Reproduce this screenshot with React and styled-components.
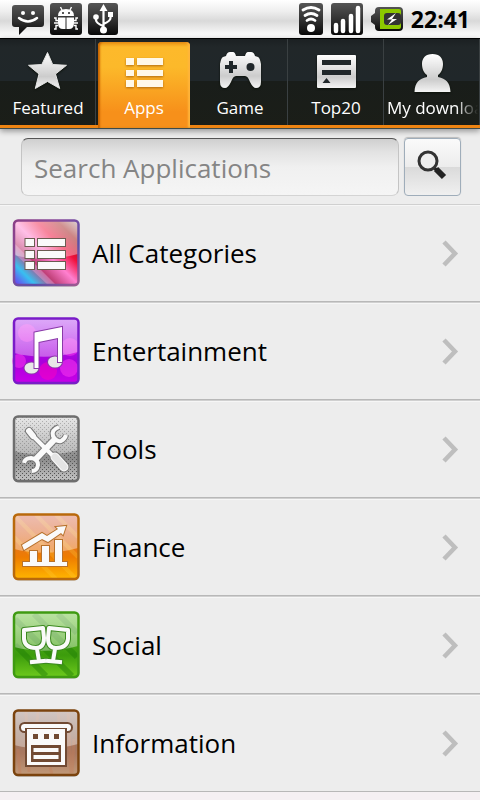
import React, { useState } from 'react';
import styled, { createGlobalStyle } from 'styled-components';

const GlobalStyle = createGlobalStyle`
  * {
    box-sizing: border-box;
  }

  body {
    margin: 0;
    background-color: #f5f0f3;
    font-family: "Open Sans", "Noto Sans", sans-serif;
  }
`;

const StatusBar = styled.header`
  display: flex;
  align-items: center;
  justify-content: space-between;
  height: 38px;
  padding: 0 10px 0 12px;
  background: linear-gradient(#ffffff 0%, #eeeeee 30%, #d9d9d9 55%, #f4f4f4 85%, #ffffff 100%);
`;

const StatusGroup = styled.div`
  display: flex;
  align-items: center;
  gap: ${({ gap }) => gap}px;

  svg {
    display: block;
  }
`;

const Clock = styled.time`
  font-size: 23px;
  font-weight: 700;
  line-height: 36px;
  color: #000;
`;

const TabBar = styled.nav`
  display: flex;
  height: 91px;
  border-top: 1px solid #000;
  border-bottom: 1px solid #3d4a4a;
  background: linear-gradient(#1b2022 0, #212729 8px, #20272a 42px, #191d1a 42px, #1b1e18 100%);
  box-shadow: inset 0 -3px 0 #ee8412, 0 2px 6px rgba(0, 0, 0, 0.4);
  position: relative;
`;

const Tab = styled.button`
  display: flex;
  flex: none;
  flex-direction: column;
  align-items: center;
  width: ${({ $active }) => ($active ? 'calc(20% - 4px)' : '20%')};
  margin: ${({ $active }) => ($active ? '3px 2px 0' : '0 0 3px')};
  padding: ${({ $active }) => ($active ? '8px 0 0' : '11px 0 0')};
  border: none;
  border-radius: ${({ $active }) => ($active ? '4px 4px 0 0' : '0')};
  background: ${({ $active }) => ($active ? 'linear-gradient(#e88f12 0, #fdb92b 5px, #fcb92a 25px, #f7901a 70px)' : 'transparent')};
  box-shadow: ${({ $active }) => ($active ? 'inset 2px 0 2px #c86400, inset -2px 0 2px #ffb53c' : 'inset -1px 0 0 #3a4042')};
  color: #fff;
  font-family: inherit;
  cursor: pointer;

  svg {
    display: block;
    filter: drop-shadow(0 1px 1px ${({ $active }) => ($active ? '#b06a10' : '#0a1008')});
  }
`;

const TabLabel = styled.span`
  width: 100%;
  padding: 2px 3px 0;
  overflow: hidden;
  font-size: 17px;
  line-height: 24px;
  text-align: ${({ $long }) => ($long ? 'left' : 'center')};
  white-space: nowrap;
  mask-image: ${({ $long }) => ($long ? 'linear-gradient(90deg, #000 75%, transparent 98%)' : 'none')};
`;

const SearchForm = styled.form`
  display: flex;
  gap: 5px;
  padding: 9px 19px 8px 21px;
  background-color: #ededed;
`;

const SearchInput = styled.input`
  flex: 1;
  min-width: 0;
  height: 58px;
  padding: 2px 12px 0;
  border: 1px solid #c4c4c4;
  border-top-color: #555;
  border-bottom-color: #d4d4d4;
  border-radius: 7px;
  background: linear-gradient(#cfcfcf, #e2e2e2 22%, #f0f0f0 50%, #f5f5f5);
  font-family: inherit;
  font-size: 26px;
  color: #333;

  &::placeholder {
    color: #858585;
    opacity: 1;
  }
`;

const SearchButton = styled.button`
  display: flex;
  align-items: center;
  justify-content: center;
  width: 57px;
  height: 58px;
  padding: 0 2px 2px 0;
  border: 1px solid #9fadba;
  border-radius: 4px;
  background: linear-gradient(#fafafa, #ececec 50%, #dadada 50%, #f0f0f0);
  box-shadow: 0 -1px 1px #bbb;
  cursor: pointer;
`;

const CategoryList = styled.ul`
  margin: 0;
  padding: 0;
  list-style: none;
`;

const CategoryRow = styled.a`
  display: flex;
  align-items: center;
  gap: 12px;
  height: 98px;
  padding: 1px 21px 0 12px;
  border-bottom: 1px solid #b8b8b8;
  background-color: #ededed;
  box-shadow: inset 0 1px 0 #d0d0d0, inset 0 2px 0 #f6f6f6;
  color: #000;
  text-decoration: none;

  svg {
    display: block;
    flex: none;
  }
`;

const CategoryName = styled.span`
  flex: 1;
  font-size: 26px;
  line-height: 36px;
`;

function MessageIcon() {
  return (
    <svg width="32" height="32" viewBox="0 0 32 32">
      <path d="M3 2h26a3 3 0 0 1 3 3v16a3 3 0 0 1-3 3H15l-8 8V24H3a3 3 0 0 1-3-3V5a3 3 0 0 1 3-3z" fill="url(#dark)" />
      <circle cx="11" cy="10" r="2" fill="#fff" />
      <circle cx="21" cy="10" r="2" fill="#fff" />
      <path d="M7 15q9 7 18 0" fill="none" stroke="#fff" strokeWidth="2.500" strokeLinecap="round" />
    </svg>
  );
}

function BugIcon() {
  return (
    <svg width="32" height="32" viewBox="0 0 32 32">
      <rect width="32" height="32" rx="3" fill="url(#dark)" />
      <path d="M8 13q0-7 8-7t8 7zM8 14.500h7.500V26H13q-5 0-5-6zM16.500 14.500H24V20q0 6-5 6h-2.500z" fill="#fff" />
      <path d="M12 7l-1.500-3M20 7l1.500-3M8 17.500H6V15H4M8 20H4M8 22.500H6V26H4M24 17.500h2V15h2M24 20h4M24 22.500h2V26h2" fill="none" stroke="#fff" strokeWidth="1.400" />
      <circle cx="13" cy="10" r="1" fill="#222" />
      <circle cx="19" cy="10" r="1" fill="#222" />
    </svg>
  );
}

function UsbIcon() {
  return (
    <svg width="30" height="32" viewBox="0 0 30 32">
      <rect width="30" height="32" rx="3" fill="url(#dark)" />
      <path d="M15.500 27V6M8 14v3q0 3 7 6M22.500 12v3q0 3-7 6" fill="none" stroke="#fff" strokeWidth="2.200" />
      <path d="M15.500 1l4 7h-8zM20 9h5v5h-5z" fill="#fff" />
      <circle cx="8" cy="14" r="2.800" fill="#fff" />
      <circle cx="15.500" cy="27" r="3.500" fill="#fff" />
    </svg>
  );
}

function WifiIcon() {
  return (
    <svg width="24" height="32" viewBox="0 0 24 32">
      <rect width="24" height="32" rx="3" fill="url(#dark)" />
      <g fill="none" stroke="#fff" strokeWidth="2.800" strokeLinecap="round">
        <path d="M4 7q8-5 16 0" />
        <path d="M6 12.500q6-4 12 0" />
        <path d="M8 17.500q4-3 8 0" />
      </g>
      <circle cx="12" cy="25" r="4" fill="#fff" />
    </svg>
  );
}

function SignalIcon() {
  return (
    <svg width="32" height="32" viewBox="0 0 32 32">
      <rect width="32" height="32" rx="3" fill="url(#dark)" />
      <g fill="none" stroke="#fff" strokeWidth="4.500" strokeLinecap="round">
        <path d="M5 28v-6M12 28V18M20 28V13M27 28V5" />
      </g>
    </svg>
  );
}

function BatteryIcon() {
  return (
    <svg width="32" height="24" viewBox="0 0 32 24">
      <path d="M8 0h20a4 4 0 0 1 4 4v16a4 4 0 0 1-4 4H8a4 4 0 0 1-4-4v-2L0 15V9l4-3V4a4 4 0 0 1 4-4z" fill="url(#dark)" />
      <path d="M9 2h19a2 2 0 0 1 2 2v16a2 2 0 0 1-2 2H9z" fill="#8cc800" />
      <rect x="13" y="6" width="17" height="12" rx="3" fill="#333" />
      <path d="M25 6l-9 6.500h5L17 18l9-6h-5z" fill="#fff" />
    </svg>
  );
}

function StarIcon() {
  return (
    <path d="M21.500 2.500l5.200 12 13.800.8-11 8.700 4.200 14.500-12.200-7-12.200 7L13 24 2.500 15.300l13.300-.8z" fill="url(#silver)" stroke="#e4e4e4" strokeLinejoin="round" />
  );
}

function ListIcon() {
  return <path d="M4 8h8v7H4zM15 8h26v7H15zM4 20h8v6H4zM15 20h26v6H15zM4 30h8v7H4zM15 30h26v7H15z" fill="#fff8e8" />;
}

function GameIcon() {
  return (
    <>
      <path d="M12 2h3q2 0 3 4h9q1-4 3-4h3q3 0 4 4l3 1q2 1 3 7v18q0 6-5 6-3 0-6-6-2-6-5-6h-9q-3 0-5 6-3 6-6 6-5 0-5-6V14q1-6 3-7l3-1q1-4 4-4z" fill="url(#silver)" />
      <path d="M13 11v12M7 17h12" stroke="#20272a" strokeWidth="4" />
      <circle cx="32.500" cy="17" r="4" fill="#20272a" />
    </>
  );
}

function TopIcon() {
  return (
    <>
      <rect x="3" y="5" width="39" height="33" rx="1" fill="url(#silver)" />
      <path d="M8 10h29v5H8zM8 20h29v5H8zM12.500 28l4 5h-8z" fill="#20272a" />
    </>
  );
}

function PersonIcon() {
  return (
    <path d="M22.500 4c7 0 10.500 4 10.500 10 0 5-2 9-5 11v2c8 2 12 5 12.500 15h-36c.5-10 4.500-13 12.500-15v-2c-3-2-5-6-5-11 0-6 3.500-10 10.500-10z" fill="url(#silver)" />
  );
}

function SearchIcon() {
  return (
    <svg width="32" height="32" viewBox="0 0 32 32">
      <path d="M18 18l3 2" stroke="#222" strokeWidth="3" />
      <path d="M20 19l8 8" stroke="#222" strokeWidth="6" />
      <circle cx="12" cy="11" r="9" fill="#eee" stroke="#333" strokeWidth="3" />
    </svg>
  );
}

function ChevronIcon() {
  return (
    <svg width="18" height="28" viewBox="0 0 18 28">
      <path d="M3 3l11 11.500L3 26" fill="none" stroke="#bebebe" strokeWidth="4.500" />
    </svg>
  );
}

// Square tile shared by all category icons
function Tile({ fill, border, children }) {
  return (
    <svg width="68" height="68" viewBox="0 0 68 68">
      <rect x="2" y="3" width="65" height="65" rx="5" fill="#000" opacity="0.15" />
      <rect x="1.500" y="1.500" width="65" height="64" rx="4" fill={fill} />
      {children[0]}
      <path d="M2 2h64v33q-32 9-64 1z" fill="url(#gloss)" />
      <rect x="2" y="1.500" width="64.500" height="64.500" rx="4" fill="none" stroke={border} strokeWidth="2.500" />
      {children[1]}
    </svg>
  );
}

function AllTile() {
  return (
    <Tile fill="url(#rainbow)" border="url(#rainbowEdge)">
      <path d="M2 34L36 66h8L2 24z" fill="#ffb0e0" opacity="0.35" />
      <path d="M13.500 20H22v7h-8.500zM26 20h27v7H26zM13.500 32H22v7h-8.500zM26 32h27v7H26zM13.500 43H22v7h-8.500zM26 43h27v7H26z" fill="#fafafa" stroke="#6b5b51" strokeWidth="2" paintOrder="stroke" />
    </Tile>
  );
}

function MusicTile() {
  return (
    <Tile fill="url(#violet)" border="#7a1cc8">
      <g fill="#ff3cf0" opacity="0.5">
        <circle cx="15" cy="16" r="9" />
        <circle cx="58" cy="30" r="9" />
        <circle cx="7" cy="44" r="7" />
        <circle cx="36" cy="54" r="9" fill="#ff00c0" />
        <circle cx="57" cy="51" r="9" />
      </g>
      <g fill="#fff" stroke="#8a3aa8" strokeWidth="2" paintOrder="stroke">
        <ellipse cx="19.500" cy="51" rx="7" ry="5.500" fill="#e8e8e8" />
        <ellipse cx="43" cy="45" rx="7" ry="5.500" fill="#e8e8e8" />
        <path d="M22.500 15.500L50 10v35h-4V21l-19.500 4v26h-4z" />
      </g>
    </Tile>
  );
}

function ToolsTile() {
  return (
    <Tile fill="url(#steel)" border="#6e6e6e">
      <rect x="2" y="2" width="64" height="64" fill="url(#mesh)" />
      <g fill="none">
        {[['#777', 2], ['#fafafa', 0]].map(([stroke, extra]) => (
          <g key={stroke} stroke={stroke}>
            <path d="M23 45L43 24" strokeWidth={6 + extra} />
            <path d="M47 12q-8 3-6 9 3 6 8 5 4-2 5-6M12 48q1-5 7-5 7 1 7 7-1 6-6 6" strokeWidth={4 + extra} />
            <path d="M19 19l21 21" strokeWidth={4 + extra} strokeLinecap="round" />
            <path d="M17 16l4 5" strokeWidth={6 + extra} strokeLinecap="round" />
            <path d="M43 42l9 10" strokeWidth={9 + extra} strokeLinecap="round" />
          </g>
        ))}
        <path d="M43 42l9 10" stroke="#e4e4e4" strokeWidth="7" strokeLinecap="round" />
      </g>
    </Tile>
  );
}

function FinanceTile() {
  return (
    <Tile fill="url(#amber)" border="#b9690b">
      <path d="M2 2l62 64M24 2l42 42M2 24l42 42M44 2l22 22" stroke="#ffd23c" strokeWidth="4" opacity="0.25" />
      <g fill="#fafafa" stroke="#b8722c" strokeWidth="2" paintOrder="stroke">
        <path d="M18 38h7v11h5V33h7v16h6V27h7v22h5v4H11v-4h7z" />
        <path d="M10 32l20-12 5 3 11-7-2-2 10-1-3 9-2-2-13 9-6-3-18 11z" />
      </g>
    </Tile>
  );
}

function SocialTile() {
  return (
    <Tile fill="url(#green)" border="#3f9a12">
      <path d="M3 8l57 57M22 3l43 43M3 34l31 31M46 3l19 19" stroke="#1f7d06" strokeWidth="6" opacity="0.45" />
      <g fill="none" strokeLinecap="square" strokeLinejoin="round">
        {[['#3d8a20', 6], ['#fafafa', 4]].map(([stroke, width]) => (
          <g key={stroke} stroke={stroke} strokeWidth={width}>
            <path d="M12 19l19-2 1 10q0 10-8 10-11 0-12-9zM25 38l2 12M20 51l12-1" />
            <path d="M56 19l-19-2-1 10q0 10 8 10 11 0 12-9zM43 38l-2 12M48 51l-12-1" />
          </g>
        ))}
      </g>
    </Tile>
  );
}

function InfoTile() {
  return (
    <Tile fill="url(#wood)" border="#7b430e">
      <path d="M6 40l2 25M14 3l3 60M26 2l-2 20M56 4l3 60M62 30l-2 34M46 3l2 18M38 58l2 7" stroke="#c87d58" strokeWidth="3" opacity="0.35" />
      <g>
        <rect x="8" y="14" width="52" height="9" rx="4.500" fill="#fafafa" stroke="#714a33" strokeWidth="2" />
        <path d="M14 19h40v38H14z" fill="#fafafa" stroke="#714a33" strokeWidth="2" />
        <path d="M12 16h44v3H12z" fill="#fafafa" />
        <path d="M21 25h5v5h-5zM32 25h5v5h-5zM42 25h5v5h-5zM19 36h30v17H19z" fill="#714a33" />
        <path d="M21.500 39h25v4h-25zM21.500 46h25v4h-25z" fill="#fafafa" />
      </g>
    </Tile>
  );
}

const Defs = styled.svg`
  position: absolute;
  width: 0;
  height: 0;
`;

function Gradient({ id, stops, y1 = 0, x2 = 0, y2 = 1 }) {
  return (
    <linearGradient id={id} x1="0" y1={y1} x2={x2} y2={y2}>
      {stops.map((color, i) => (
        <stop key={i} offset={i / (stops.length - 1)} stopColor={color} />
      ))}
    </linearGradient>
  );
}

function IconDefs() {
  return (
    <Defs aria-hidden="true">
      <defs>
        <Gradient id="dark" stops={['#555555', '#333333', '#080808']} />
        <Gradient id="silver" stops={['#ffffff', '#e6e6e6', '#cccccc', '#f4f4f4']} />
        <Gradient id="rainbow" y1={1} x2={1} y2={0} stops={['#7030f0', '#38c0f0', '#c04078', '#ff80d0', '#f0103c', '#a01818', '#b0a0a0']} />
        <Gradient id="rainbowEdge" x2={1} stops={['#8a3f86', '#8a4b9c', '#5a4fa8', '#a05890']} />
        <Gradient id="violet" stops={['#b23ff0', '#b018e8', '#a800dc', '#c800e8']} />
        <Gradient id="steel" stops={['#c8c8c8', '#a0a0a0', '#8c8c8c', '#c4c4c4']} />
        <Gradient id="amber" stops={['#d86a50', '#e07030', '#ee7c00', '#ffb400']} />
        <Gradient id="green" stops={['#66c030', '#50ac1c', '#3c9c0c', '#6cc81c']} />
        <Gradient id="wood" stops={['#9a8078', '#987868', '#a87860', '#c09878']} />
        <linearGradient id="gloss" x1="0" y1="0" x2="0" y2="1">
          <stop offset="0" stopColor="#fff" stopOpacity="0.55" />
          <stop offset="1" stopColor="#fff" stopOpacity="0.35" />
        </linearGradient>
        <pattern id="mesh" width="4" height="4" patternUnits="userSpaceOnUse">
          <path d="M0 0h1v1H0zM2 2h1v1H2z" fill="#555" />
        </pattern>
      </defs>
    </Defs>
  );
}

const tabs = [
  { label: 'Featured', Icon: StarIcon },
  { label: 'Apps', Icon: ListIcon },
  { label: 'Game', Icon: GameIcon },
  { label: 'Top20', Icon: TopIcon },
  { label: 'My downloads', Icon: PersonIcon, long: true },
];

const categories = [
  { name: 'All Categories', Icon: AllTile },
  { name: 'Entertainment', Icon: MusicTile },
  { name: 'Tools', Icon: ToolsTile },
  { name: 'Finance', Icon: FinanceTile },
  { name: 'Social', Icon: SocialTile },
  { name: 'Information', Icon: InfoTile },
];

function App() {
  const [activeTab, setActiveTab] = useState('Apps');
  const [query, setQuery] = useState('');

  const handleSubmit = (event) => {
    event.preventDefault();
  };

  return (
    <>
      <GlobalStyle />
      <IconDefs />
      <StatusBar>
        <StatusGroup gap={6}>
          <MessageIcon />
          <BugIcon />
          <UsbIcon />
        </StatusGroup>
        <StatusGroup gap={8}>
          <WifiIcon />
          <SignalIcon />
          <BatteryIcon />
          <Clock>22:41</Clock>
        </StatusGroup>
      </StatusBar>
      <TabBar>
        {tabs.map(({ label, Icon, long }) => (
          <Tab key={label} type="button" $active={label === activeTab} onClick={() => setActiveTab(label)}>
            <svg width="44" height="44" viewBox="0 0 44 44">
              <Icon />
            </svg>
            <TabLabel $long={long}>{label}</TabLabel>
          </Tab>
        ))}
      </TabBar>
      <SearchForm role="search" onSubmit={handleSubmit}>
        <SearchInput
          type="text"
          aria-label="Search Applications"
          placeholder="Search Applications"
          value={query}
          onChange={(event) => setQuery(event.target.value)}
        />
        <SearchButton type="submit" aria-label="Search">
          <SearchIcon />
        </SearchButton>
      </SearchForm>
      <CategoryList>
        {categories.map(({ name, Icon }) => (
          <li key={name}>
            <CategoryRow href="#">
              <Icon />
              <CategoryName>{name}</CategoryName>
              <ChevronIcon />
            </CategoryRow>
          </li>
        ))}
      </CategoryList>
    </>
  );
}

export default App;
